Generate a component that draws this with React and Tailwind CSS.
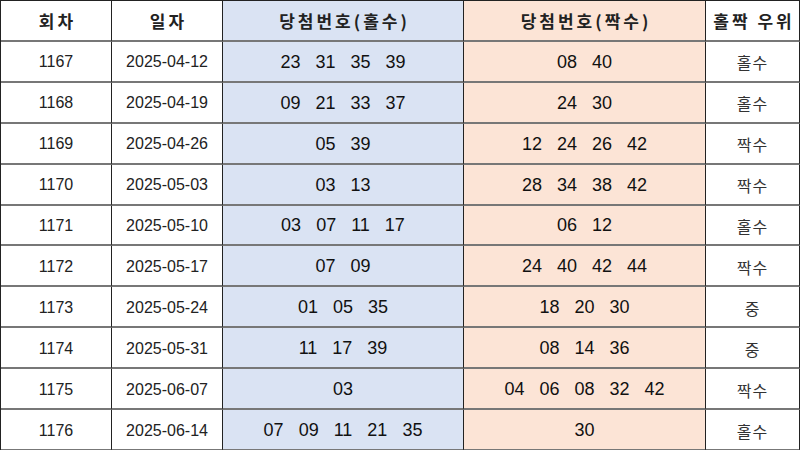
const rows = [
  ["1167", "2025-04-12", ["23", "31", "35", "39"], ["08", "40"], "홀수"],
  ["1168", "2025-04-19", ["09", "21", "33", "37"], ["24", "30"], "홀수"],
  ["1169", "2025-04-26", ["05", "39"], ["12", "24", "26", "42"], "짝수"],
  ["1170", "2025-05-03", ["03", "13"], ["28", "34", "38", "42"], "짝수"],
  ["1171", "2025-05-10", ["03", "07", "11", "17"], ["06", "12"], "홀수"],
  ["1172", "2025-05-17", ["07", "09"], ["24", "40", "42", "44"], "짝수"],
  ["1173", "2025-05-24", ["01", "05", "35"], ["18", "20", "30"], "중"],
  ["1174", "2025-05-31", ["11", "17", "39"], ["08", "14", "36"], "중"],
  ["1175", "2025-06-07", ["03"], ["04", "06", "08", "32", "42"], "짝수"],
  ["1176", "2025-06-14", ["07", "09", "11", "21", "35"], ["30"], "홀수"],
];

const kr = { fontFamily: '"Noto Sans CJK KR", "Noto Sans", sans-serif' };
const num = { fontFamily: '"Liberation Sans", Arial, sans-serif' };

function Numbers({ list }) {
  return (
    <div className="flex gap-[15px] text-[18px] text-[#111] pt-[2px]" style={num}>
      {list.map((n, i) => (
        <span key={i}>{n}</span>
      ))}
    </div>
  );
}

export default function App() {
  const cell = "flex items-center justify-center border-r border-r-[#222] border-b-2 border-b-[#777]";
  const headers = ["회차", "일자", "당첨번호(홀수)", "당첨번호(짝수)", "홀짝 우위"];
  const headBg = ["bg-white", "bg-white", "bg-[#dae3f3]", "bg-[#fce4d6]", "bg-white"];

  return (
    <div className="w-[800px] h-[450px] bg-white overflow-hidden">
      <div className="grid grid-cols-[111px_111px_241px_242px_1fr] grid-rows-[repeat(11,1fr)] h-[451px] border-l border-t border-[#222]">
        {headers.map((h, i) => (
          <div key={h} className={`${cell} ${headBg[i]}`}>
            <span className="text-[17px] font-bold tracking-[3px] text-[#222] pl-[3px] pt-[1px]" style={kr}>
              {h}
            </span>
          </div>
        ))}
        {rows.map((r) => (
          <div key={r[0]} className="contents">
            <div className={`${cell} text-[16px] text-[#222] pt-[2px]`} style={num}>
              {r[0]}
            </div>
            <div className={`${cell} text-[16px] text-[#222] pt-[2px]`} style={num}>
              {r[1]}
            </div>
            <div className={`${cell} bg-[#dae3f3]`}>
              <Numbers list={r[2]} />
            </div>
            <div className={`${cell} bg-[#fce4d6]`}>
              <Numbers list={r[3]} />
            </div>
            <div className={`${cell} text-[16px] text-[#333] tracking-[1px] pt-[2px]`} style={kr}>
              {r[4]}
            </div>
          </div>
        ))}
      </div>
    </div>
  );
}
